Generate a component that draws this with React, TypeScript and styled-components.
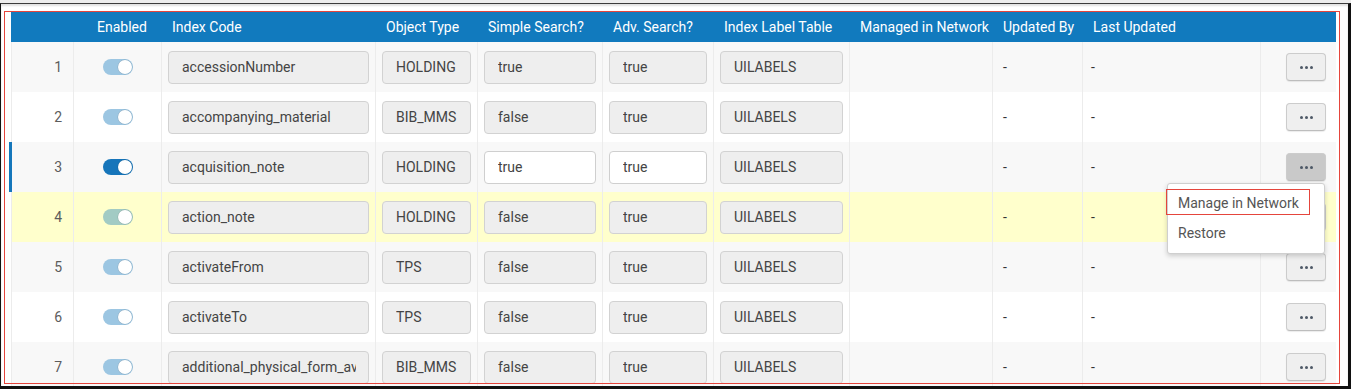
import React from 'react';
import styled, { createGlobalStyle, css } from 'styled-components';

const GlobalStyle = createGlobalStyle`
  * { box-sizing: border-box; }
  body {
    margin: 0;
    background: #ffffff;
    font-family: Roboto, "Liberation Sans", Arial, sans-serif;
  }
`;

const COLUMNS = '62px 88px 214px 102px 125px 111px 136px 143px 90px 178px 76px';

const Shell = styled.div`
  width: 1351px;
  height: 389px;
  border-top: 3px solid #ececec;
`;

const Frame = styled.div`
  position: relative;
  height: 386px;
  overflow: hidden;
  border-top: 1px solid #3a3a3a;
  border-left: 1px solid #111;
  border-right: 3px solid #111;
  border-bottom: 3px solid #111;
  box-shadow: inset 0 2px 2px rgba(0, 0, 0, 0.12);
  padding: 8px 0 0 10px;
`;

const Annotation = styled.div`
  position: absolute;
  left: 3px;
  top: 7px;
  width: 1336px;
  height: 373px;
  border: 1px solid #e5453c;
  pointer-events: none;
  z-index: 3;
`;

const Table = styled.div`
  width: 1325px;
`;

const HeaderRow = styled.div`
  display: grid;
  grid-template-columns: ${COLUMNS};
  height: 30px;
  background: #117abe;
  color: #ffffff;
  font-size: 14px;
`;

const HeaderCell = styled.div<{ $center?: boolean }>`
  display: flex;
  align-items: center;
  padding-left: 11px;
  white-space: nowrap;
  ${p => p.$center && css`
    justify-content: center;
    padding-left: 10px;
  `}
`;

const Row = styled.div<{ $tone: 'gray' | 'white' | 'yellow'; $selected?: boolean }>`
  position: relative;
  display: grid;
  grid-template-columns: ${COLUMNS};
  height: 50px;
  background: ${p => (p.$tone === 'gray' ? '#f8f8f8' : p.$tone === 'yellow' ? '#ffffcc' : '#ffffff')};
  ${p => p.$selected && css`
    &::before {
      content: '';
      position: absolute;
      left: -2px;
      top: 0;
      bottom: 0;
      width: 3px;
      background: #1577bb;
    }
  `}
`;

const Cell = styled.div<{ $align?: 'left' | 'center' | 'right' }>`
  display: flex;
  align-items: center;
  justify-content: ${p => (p.$align === 'center' ? 'center' : p.$align === 'right' ? 'flex-end' : 'flex-start')};
  border-left: 1px solid #ececec;
  padding: 0 6px;
  font-size: 14px;
  color: #333;
  min-width: 0;
`;

const NumCell = styled(Cell)`
  justify-content: flex-end;
  padding-right: 11px;
  color: #5c5c5c;
`;

const TextCell = styled(Cell)<{ $pad: number }>`
  padding-left: ${p => p.$pad}px;
`;

const ActionCell = styled(Cell)`
  justify-content: flex-end;
  padding-right: 10px;
`;

const Field = styled.input<{ $editable?: boolean }>`
  width: 100%;
  height: 33px;
  margin: 0;
  padding: 0 12px 0 13px;
  border: 1px solid ${p => (p.$editable ? '#cfcfcf' : '#d2d2d2')};
  border-radius: 4px;
  background: ${p => (p.$editable ? '#ffffff' : '#eeeeee')};
  font-family: Roboto, "Liberation Sans", Arial, sans-serif;
  font-size: 14px;
  color: #444;
  outline: none;
`;

const Track = styled.div<{ $on?: boolean; $tint?: boolean }>`
  position: relative;
  width: 30px;
  height: 16px;
  border-radius: 8px;
  background: ${p => (p.$on ? '#1675ba' : p.$tint ? '#a2cbc4' : '#9cc6e2')};
`;

const Knob = styled.div`
  position: absolute;
  right: 1px;
  top: 1px;
  width: 14px;
  height: 14px;
  border-radius: 50%;
  background: #ffffff;
  box-shadow: 0 0 0 0.5px rgba(0, 0, 0, 0.15);
`;

const DotsButton = styled.div<{ $active?: boolean }>`
  display: flex;
  align-items: center;
  justify-content: center;
  gap: 2px;
  width: 40px;
  height: 28px;
  border: 1px solid #cccccc;
  border-bottom-color: #bdbdbd;
  border-radius: 4px;
  background: ${p => (p.$active ? '#c9c9c9' : '#efefef')};
  box-shadow: 0 1px 1px rgba(0, 0, 0, 0.08);
`;

const Dot = styled.span`
  width: 3px;
  height: 3px;
  border-radius: 50%;
  background: #4d5866;
`;

const Menu = styled.div`
  position: absolute;
  left: 1166px;
  top: 179px;
  width: 158px;
  padding: 5px 0 4px;
  background: #ffffff;
  border: 1px solid #cfcfcf;
  border-radius: 3px;
  box-shadow: 0 2px 5px rgba(0, 0, 0, 0.18);
  z-index: 2;
`;

const MenuItem = styled.div`
  position: relative;
  height: 30px;
  line-height: 28px;
  padding-left: 10px;
  font-size: 14px;
  color: #555;
  white-space: nowrap;
`;

const Highlight = styled.span`
  position: absolute;
  left: -2px;
  top: 0;
  width: 144px;
  height: 26px;
  border: 1px solid #e5453c;
`;

type RowData = {
  code: string;
  type: string;
  simple: string;
  adv: string;
};

const rows: RowData[] = [
  { code: 'accessionNumber', type: 'HOLDING', simple: 'true', adv: 'true' },
  { code: 'accompanying_material', type: 'BIB_MMS', simple: 'false', adv: 'true' },
  { code: 'acquisition_note', type: 'HOLDING', simple: 'true', adv: 'true' },
  { code: 'action_note', type: 'HOLDING', simple: 'false', adv: 'true' },
  { code: 'activateFrom', type: 'TPS', simple: 'false', adv: 'true' },
  { code: 'activateTo', type: 'TPS', simple: 'false', adv: 'true' },
  { code: 'additional_physical_form_available', type: 'BIB_MMS', simple: 'false', adv: 'true' },
];

const headers = [
  '', 'Enabled', 'Index Code', 'Object Type', 'Simple Search?', 'Adv. Search?',
  'Index Label Table', 'Managed in Network', 'Updated By', 'Last Updated', '',
];

const SELECTED = 2;
const HOVERED = 3;

function App() {
  return (
    <Shell>
      <GlobalStyle />
      <Frame>
        <Table>
          <HeaderRow>
            {headers.map((h, i) => (
              <HeaderCell key={i} $center={h === 'Enabled'}>{h}</HeaderCell>
            ))}
          </HeaderRow>
          {rows.map((r, i) => {
            const tone = i === HOVERED ? 'yellow' : i % 2 === 0 ? 'gray' : 'white';
            const selected = i === SELECTED;
            return (
              <Row key={r.code} $tone={tone} $selected={selected}>
                <NumCell>{i + 1}</NumCell>
                <Cell $align="center">
                  <Track $on={selected} $tint={i === HOVERED}>
                    <Knob />
                  </Track>
                </Cell>
                <Cell><Field readOnly value={r.code} /></Cell>
                <Cell><Field readOnly value={r.type} /></Cell>
                <Cell><Field readOnly $editable={selected} value={r.simple} /></Cell>
                <Cell><Field readOnly $editable={selected} value={r.adv} /></Cell>
                <Cell><Field readOnly value="UILABELS" /></Cell>
                <Cell />
                <TextCell $pad={10}>-</TextCell>
                <TextCell $pad={8}>-</TextCell>
                <ActionCell>
                  <DotsButton $active={selected}>
                    <Dot /><Dot /><Dot />
                  </DotsButton>
                </ActionCell>
              </Row>
            );
          })}
        </Table>
        <Menu>
          <MenuItem>
            <Highlight />
            Manage in Network
          </MenuItem>
          <MenuItem>Restore</MenuItem>
        </Menu>
        <Annotation />
      </Frame>
    </Shell>
  );
}

export default App;
